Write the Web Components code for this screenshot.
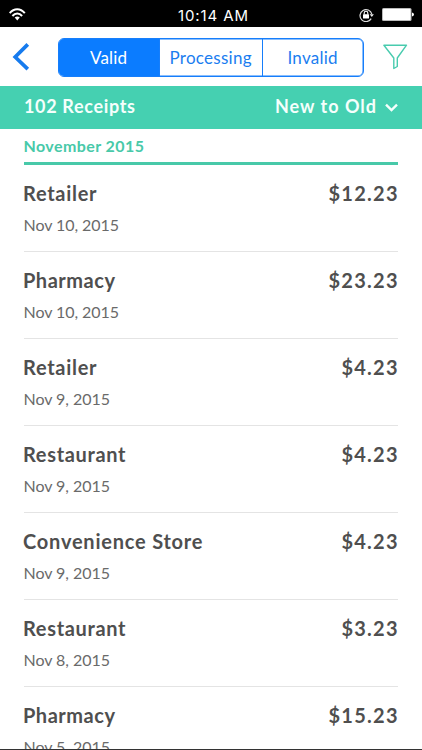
<!DOCTYPE html>
<html lang="en">
<head>
<meta charset="utf-8">
<title>Receipts</title>
<style>
html,body{margin:0;height:100%;background:#fff;overflow:hidden}
</style>
</head>
<body>
<receipts-app></receipts-app>
<script>
const make = (host, html) => { host.attachShadow({mode:'open'}).innerHTML = html; };

/* Text tracked so that it fills a given width */
customElements.define('tracked-text', class extends HTMLElement {
  connectedCallback() {
    make(this, `<style>:host{display:inline-block;white-space:nowrap;width:var(--w)}span{display:inline-block}</style><span></span>`);
    const s = this.shadowRoot.querySelector('span');
    s.textContent = this.getAttribute('text');
    const w = +this.getAttribute('w');
    this.style.setProperty('--w', w + 'px');
    const n = s.textContent.length;
    s.style.letterSpacing = ((w - s.getBoundingClientRect().width) / (n - 1)).toFixed(3) + 'px';
  }
});

customElements.define('status-bar', class extends HTMLElement {
  connectedCallback() {
    make(this, `<style>
      :host{display:grid;grid-template-columns:1fr auto 1fr;align-items:center;height:27px;background:#000;color:#fff;font:400 15px/27px Inter,sans-serif;box-sizing:border-box;padding:0 8px 0 9px}
      .r{display:flex;justify-content:flex-end;align-items:center;gap:8px}
      svg{display:block}
      tracked-text{margin:2px 0 0 3px}
    </style>
    <svg width="17" height="13" viewBox="0 0 17 13" fill="none" stroke="#fff" stroke-width="2">
      <path d="M.7 5.1C5-.1 11.400-.1 15.800 5.100"/><path d="M3.400 8C6.300 4.500 10.200 4.500 13.100 8"/><path d="M5.700 9.600C7.400 8 9.100 8 10.800 9.600L8.250 12.600Z" fill="#fff" stroke="none"/>
    </svg>
    <tracked-text text="10:14 AM" w="70"></tracked-text>
    <div class="r">
      <svg width="15" height="14" viewBox="0 0 15 14"><path d="M12.200 10.600A6 6 0 1 1 12.800 6" fill="none" stroke="#ddd" stroke-width="1.200"/><path d="M10.700 6.200h4.200l-2.100 2.700z" fill="#eee"/><rect x="4" y="6.300" width="6" height="4.200" rx=".5" fill="#fff"/><path d="M5.200 6.500V5a1.800 1.800 0 0 1 3.600 0v1.500" fill="none" stroke="#fff" stroke-width="1.100"/></svg>
      <svg width="32" height="13" viewBox="0 0 32 13"><rect width="29.500" height="13" rx="1.500" fill="#bbb"/><rect x="1" y="1" width="27.500" height="11" rx=".7" fill="#fff"/><path d="M30 4.500q2 .5 2 2t-2 2z" fill="#fff"/></svg>
    </div>`);
  }
});

customElements.define('segment-tab', class extends HTMLElement {
  connectedCallback() {
    make(this, `<style>
      :host{display:flex;align-items:center;justify-content:center;color:#1a7df0;border-left:1.500px solid #167efb;box-sizing:border-box}
      :host(:first-child){border-left:0}
      :host([active]){background:#0b7cff;color:#fff}
    </style><slot></slot>`);
  }
});

customElements.define('nav-bar', class extends HTMLElement {
  connectedCallback() {
    make(this, `<style>
      :host{display:flex;align-items:flex-start;height:59px;box-sizing:border-box;padding:11px 14px 0 12px;background:#fff}
      .seg{display:grid;grid-template-columns:100px 103px 1fr;width:306px;height:39px;box-sizing:border-box;border:1px solid #167efb;border-radius:6px;overflow:hidden;font:400 17px/22px Lato,sans-serif;margin-left:27.500px;margin-right:19px;box-shadow:inset 0 0 0 .5px #167efb}
      svg{display:block;flex:none}
    </style>
    <svg width="18" height="39" viewBox="0 0 18 39" fill="none" stroke="#167bee" stroke-width="3.700"><path d="M15.800 6.400L3.200 19l12.600 12.200"/></svg>
    <div class="seg">
      <segment-tab active><tracked-text text="Valid" w="37"></tracked-text></segment-tab>
      <segment-tab><tracked-text text="Processing" w="82"></tracked-text></segment-tab>
      <segment-tab><tracked-text text="Invalid" w="50"></tracked-text></segment-tab>
    </div>
    <svg width="25" height="39" viewBox="0 0 25 39" fill="none" stroke="#48cbae" stroke-width="1.400" stroke-linejoin="round"><path d="M.9 7.200H23.500L14.300 20V28.500L10.800 30.500V20Z"/></svg>`);
  }
});

customElements.define('sort-bar', class extends HTMLElement {
  connectedCallback() {
    make(this, `<style>
      :host{display:flex;align-items:center;justify-content:space-between;height:42.500px;box-sizing:border-box;padding:0 24px 2px 24px;background:#45d0b1;color:#f5fffc;font:700 18px/22px Lato,sans-serif}
      .s{display:flex;align-items:center;gap:9px}
      svg{margin-top:2px}
    </style>
    <tracked-text text="102 Receipts" w="111"></tracked-text>
    <div class="s"><tracked-text text="New to Old" w="101"></tracked-text>
    <svg width="13" height="9" viewBox="0 0 13 9" fill="none" stroke="#f5fffc" stroke-width="2.400"><path d="M1 1.600L6.500 7L12 1.600"/></svg></div>`);
  }
});

customElements.define('month-heading', class extends HTMLElement {
  connectedCallback() {
    make(this, `<style>
      :host{display:block;height:36.500px;box-sizing:border-box;padding-top:7.500px;border-bottom:3px solid #48c9a9;color:#48c9a9;font:700 16px/20px Lato,sans-serif}
    </style><tracked-text text="November 2015" w="120.500"></tracked-text>`);
  }
});

customElements.define('receipt-row', class extends HTMLElement {
  connectedCallback() {
    const a = k => this.getAttribute(k);
    make(this, `<style>
      :host{display:grid;grid-template-columns:1fr auto;grid-template-rows:24px 20px;row-gap:10px;height:87px;box-sizing:border-box;padding-top:16px;border-bottom:1.500px solid #e4e4e4;color:#4f4f4f;font:700 20px/24px Lato,sans-serif}
      .n{margin-left:-.5px}
      .m{margin-right:.5px}
      .d{font:400 16px/20px Lato,sans-serif;color:#6a6a6a}
    </style>
    <tracked-text class="n" text="${a('name')}" w="${a('nw')}"></tracked-text>
    <tracked-text class="m" text="${a('amount')}" w="${a('aw')}"></tracked-text>
    <tracked-text class="d" text="${a('date')}" w="${a('dw')}"></tracked-text>`);
  }
});

customElements.define('receipts-app', class extends HTMLElement {
  connectedCallback() {
    const rows = [
      ['Retailer',73.5,'$12.23',69,'Nov 10, 2015',95.5],
      ['Pharmacy',92,'$23.23',69,'Nov 10, 2015',95.5],
      ['Retailer',73.5,'$4.23',56,'Nov 9, 2015',86.5],
      ['Restaurant',102.5,'$4.23',56,'Nov 9, 2015',86.5],
      ['Convenience Store',179.5,'$4.23',56,'Nov 9, 2015',86.5],
      ['Restaurant',102.5,'$3.23',56,'Nov 8, 2015',86.5],
      ['Pharmacy',92,'$15.23',69,'Nov 5, 2015',86.5]];
    make(this, `<style>
      :host{display:flex;flex-direction:column;width:422px;height:750px;box-sizing:border-box;border-bottom:1px solid #333;overflow:hidden;background:#fff}
      main{flex:1;min-height:0;overflow:hidden;padding:0 24px 0 23.500px}
      status-bar,nav-bar,sort-bar{flex:none}
    </style>
    <status-bar></status-bar><nav-bar></nav-bar><sort-bar></sort-bar>
    <main><month-heading></month-heading>${rows.map(r => `<receipt-row name="${r[0]}" nw="${r[1]}" amount="${r[2]}" aw="${r[3]}" date="${r[4]}" dw="${r[5]}"></receipt-row>`).join('')}</main>`);
  }
});
</script>
</body>
</html>
